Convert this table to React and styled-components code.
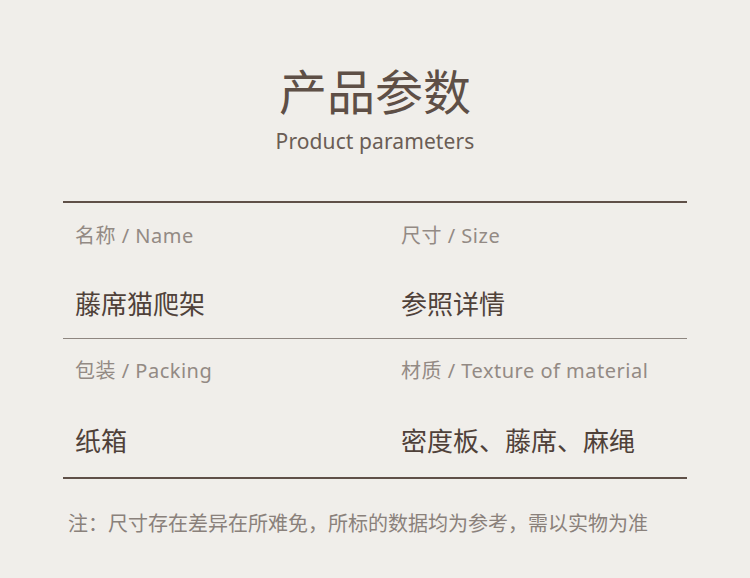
import React from 'react';
import styled, { createGlobalStyle } from 'styled-components';

const GlobalStyle = createGlobalStyle`
  html, body {
    margin: 0;
    padding: 0;
    background: #f0eeea;
  }
  body {
    font-family: "Noto Sans", "Noto Sans CJK SC", sans-serif;
  }
`

const Page = styled.div`
  width: 750px;
  height: 578px;
  box-sizing: border-box;
  padding-top: 61px;
  display: flex;
  flex-direction: column;
  align-items: center;
  background: #f0eeea;
`

const Title = styled.h1`
  margin: 0;
  font-family: "Noto Sans CJK SC", sans-serif;
  font-weight: 400;
  font-size: 48px;
  line-height: 56px;
  color: #5e4f46;
`

const Subtitle = styled.div`
  margin-top: 11px;
  font-family: "Noto Sans", "Noto Sans CJK SC", sans-serif;
  font-size: 21px;
  line-height: 26px;
  color: #6a5d55;
  letter-spacing: 0.1px;
`

const Table = styled.div`
  width: 624px;
  margin-top: 47px;
  border-top: 2px solid #5f5048;
  border-bottom: 2px solid #5f5048;
`

const Row = styled.div`
  display: grid;
  grid-template-columns: 326px 1fr;
  border-top: ${p => (p.first ? 'none' : '1px solid #8e8680')};
`

const Cell = styled.div`
  padding: ${p => p.pad} 12px ${p => p.padBottom};
  display: flex;
  flex-direction: column;
  gap: ${p => p.gap};
`

const Label = styled.div`
  font-family: "Noto Sans", "Noto Sans CJK SC", sans-serif;
  font-size: 20px;
  line-height: 24px;
  color: #938a84;
  letter-spacing: 0.5px;
`

const Value = styled.div`
  font-family: "Noto Sans CJK SC", sans-serif;
  font-size: 26px;
  line-height: 30px;
  color: #4f4139;
`

const Note = styled.div`
  width: 624px;
  margin-top: 31px;
  padding-left: 5px;
  box-sizing: border-box;
  font-family: "Noto Sans CJK SC", sans-serif;
  font-size: 20px;
  line-height: 26px;
  color: #8a817b;
`

const rows = [
  {
    pad: '21px', gap: '40px', padBottom: '20px', first: true,
    cells: [
      { label: '名称 / Name', value: '藤席猫爬架' },
      { label: '尺寸 / Size', value: '参照详情' },
    ],
  },
  {
    pad: '20px', gap: '42px', padBottom: '22px',
    cells: [
      { label: '包装 / Packing', value: '纸箱' },
      { label: '材质 / Texture of material', value: '密度板、藤席、麻绳' },
    ],
  },
]

const App = () => {
  return (
    <Page>
      <GlobalStyle />
      <Title>产品参数</Title>
      <Subtitle>Product parameters</Subtitle>
      <Table>
        {rows.map((row, i) => (
          <Row key={i} first={row.first}>
            {row.cells.map(c => (
              <Cell key={c.label} pad={row.pad} gap={row.gap} padBottom={row.padBottom}>
                <Label>{c.label}</Label>
                <Value>{c.value}</Value>
              </Cell>
            ))}
          </Row>
        ))}
      </Table>
      <Note>注：尺寸存在差异在所难免，所标的数据均为参考，需以实物为准</Note>
    </Page>
  )
}

export default App;
